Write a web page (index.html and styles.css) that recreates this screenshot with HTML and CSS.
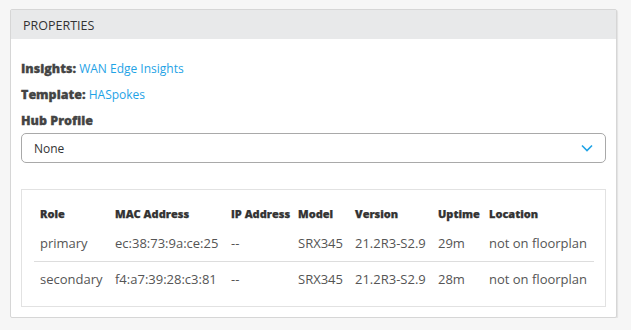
FILE: index.html
```html
<!DOCTYPE html>
<html lang="en">

<head>
    <meta charset="UTF-8">
    <title>Properties</title>
    <link rel="stylesheet" href="styles.css">
</head>

<body>
    <section class="panel">
        <header class="panel-header">PROPERTIES</header>

        <div class="panel-body">
            <p class="field"><strong>Insights:</strong> <a href="#">WAN Edge Insights</a></p>
            <p class="field"><strong>Template:</strong> <a href="#">HASpokes</a></p>

            <label class="field-label">Hub Profile</label>
            <div class="select">
                <span>None</span>
                <svg class="chevron" width="12" height="8" viewBox="0 0 12 8">
                    <path d="M1 1.5 L6 6.5 L11 1.5" fill="none" stroke="#1fa3e6" stroke-width="1.6" />
                </svg>
            </div>

            <div class="devices">
                <table>
                    <thead>
                        <tr>
                            <th class="c-role">Role</th>
                            <th class="c-mac">MAC Address</th>
                            <th class="c-ip">IP Address</th>
                            <th class="c-model">Model</th>
                            <th class="c-version">Version</th>
                            <th class="c-uptime">Uptime</th>
                            <th>Location</th>
                        </tr>
                    </thead>
                    <tbody>
                        <tr>
                            <td>primary</td>
                            <td>ec:38:73:9a:ce:25</td>
                            <td>--</td>
                            <td>SRX345</td>
                            <td>21.2R3-S2.9</td>
                            <td>29m</td>
                            <td>not on floorplan</td>
                        </tr>
                        <tr>
                            <td>secondary</td>
                            <td>f4:a7:39:28:c3:81</td>
                            <td>--</td>
                            <td>SRX345</td>
                            <td>21.2R3-S2.9</td>
                            <td>28m</td>
                            <td>not on floorplan</td>
                        </tr>
                    </tbody>
                </table>
            </div>
        </div>
    </section>
</body>

</html>
```

FILE: styles.css
```css
* {
    margin: 0;
    padding: 0;
    box-sizing: border-box;
}

body {
    font-family: "Open Sans", Arial, sans-serif;
    background: #f6f6f6;
    color: #333;
    padding: 9px 14px 0 10px;
}

.panel {
    background: #fff;
    border: 1px solid #d6d6d6;
    border-radius: 2px;
    box-shadow: 1px 1px 1px rgba(0, 0, 0, 0.08);
}

.panel-header {
    background: #e8e9ea;
    height: 29px;
    padding: 1px 0 0 12px;
    font-size: 12.5px;
    line-height: 29px;
    color: #333;
}

.panel-body {
    padding: 22px 10px 10px 10px;
}

.field {
    font-size: 12px;
    line-height: 16px;
    margin-bottom: 10px;
}

.field strong,
.field-label {
    font-size: 12.5px;
    font-weight: 800;
    color: #444;
    -webkit-text-stroke: 0.3px #444;
}

.field a {
    color: #1fa3e6;
    text-decoration: none;
}

.field-label {
    display: block;
    line-height: 16px;
    margin-top: 1px;
}

.select {
    margin-top: 4px;
    height: 30px;
    border: 1px solid #a9a9a9;
    border-radius: 5px;
    display: flex;
    align-items: center;
    justify-content: space-between;
    padding: 0 12px 0 12px;
    font-size: 12px;
    color: #333;
}

.devices {
    margin-top: 26px;
    border: 1px solid #e2e2e2;
    padding: 11px 12px 9px 12px;
}

table {
    width: 560px;
    border-collapse: collapse;
}

th {
    text-align: left;
    font-size: 11px;
    font-weight: 800;
    color: #333;
    -webkit-text-stroke: 0.25px #333;
    padding: 0 0 0 6px;
    height: 24px;
}

td {
    font-size: 13px;
    color: #555;
    padding: 0 0 0 6px;
    height: 36px;
    white-space: nowrap;
}

tbody tr:first-child td {
    border-bottom: 1px solid #ddd;
}

.c-role { width: 75px; }
.c-mac { width: 116px; }
.c-ip { width: 67px; }
.c-model { width: 57px; }
.c-version { width: 83px; }
.c-uptime { width: 51px; }
```
